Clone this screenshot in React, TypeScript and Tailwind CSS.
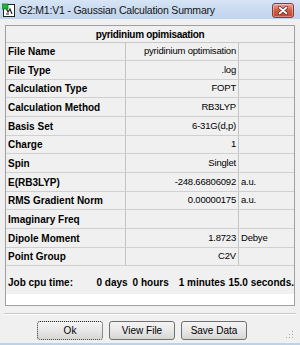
import React from "react";

const rows: [string, string, string][] = [
  ["File Name", "pyridinium optimisation", ""],
  ["File Type", ".log", ""],
  ["Calculation Type", "FOPT", ""],
  ["Calculation Method", "RB3LYP", ""],
  ["Basis Set", "6-31G(d,p)", ""],
  ["Charge", "1", ""],
  ["Spin", "Singlet", ""],
  ["E(RB3LYP)", "-248.66806092", "a.u."],
  ["RMS Gradient Norm", "0.00000175", "a.u."],
  ["Imaginary Freq", "", ""],
  ["Dipole Moment", "1.8723", "Debye"],
  ["Point Group", "C2V", ""],
];

const heights = [18, 19, 18, 19, 19, 18, 19, 19, 18, 19, 19, 18];

function AppIcon() {
  return (
    <svg width="14" height="14" viewBox="0 0 14 14">
      <rect x="1.5" y="1.5" width="11" height="12" fill="#fff" stroke="#222" />
      <path d="M4 5 L6 9 L8 6 L10 11" stroke="#222" strokeWidth="1.2" fill="none" />
      <path d="M4 11 h3" stroke="#222" strokeWidth="1" />
      <rect x="0" y="1" width="6" height="5" fill="#22b33a" stroke="#117a22" strokeWidth="0.8" />
    </svg>
  );
}

function CloseButton() {
  return (
    <div className="mt-[3px] mr-[6px] w-[22px] h-[15px] rounded-[3px] border border-[#8a3b2e] bg-gradient-to-b from-[#e9a597] via-[#d05c48] to-[#c7442f] flex items-center justify-center shadow-[inset_0_0_0_1px_rgba(255,255,255,0.35)]">
      <svg width="10" height="9" viewBox="0 0 10 9">
        <path d="M1.5 1.5 L8.5 7.5 M8.5 1.5 L1.5 7.5" stroke="#5a2018" strokeWidth="3.2" strokeLinecap="round" />
        <path d="M1.5 1.5 L8.5 7.5 M8.5 1.5 L1.5 7.5" stroke="#ffffff" strokeWidth="1.8" strokeLinecap="round" />
      </svg>
    </div>
  );
}

function Btn({ label, focus }: { label: string; focus?: boolean }) {
  return (
    <div
      className={
        focus
          ? "w-[66px] h-[19px] rounded-[3px] border border-dotted border-[#303030] bg-gradient-to-b from-[#f4f4f4] via-[#e8e8e8] to-[#d6d6d6] flex items-center justify-center text-[10px] text-black"
          : "w-[66px] h-[19px] rounded-[3px] border border-[#707070] bg-gradient-to-b from-[#f4f4f4] via-[#e8e8e8] to-[#d6d6d6] flex items-center justify-center text-[10px] text-black"
      }
    >
      {label}
    </div>
  );
}

export default function App() {
  return (
    <div
      className="relative w-[300px] h-[345px] flex flex-col bg-[#f0f0f0] overflow-hidden"
      style={{ fontFamily: '"Liberation Sans", Arial, sans-serif' }}
    >
      <div className="h-[19px] flex items-start bg-gradient-to-b from-[#d6e4f5] to-[#bfd3ec]">
        <div className="ml-[2px] mt-[3px]">
          <AppIcon />
        </div>
        <div className="ml-[3px] mt-[3px] text-[10.5px] tracking-[-0.2px] leading-[14px] text-[#141414] flex-1">
          G2:M1:V1 - Gaussian Calculation Summary
        </div>
        <CloseButton />
      </div>

      <div className="mt-[6px] ml-[5px] w-[290px] border border-[#a0a0a0] flex flex-col">
        <div className="h-[17px] border-b border-[#c8c8c8] flex items-center justify-center text-[10px] font-bold tracking-[-0.3px] text-black">
          pyridinium opimisaation
        </div>
        {rows.map(([label, value, unit], i) => (
          <div
            key={label}
            className={
              heights[i] === 18
                ? "h-[18px] border-b border-[#d0d0d0] flex"
                : "h-[19px] border-b border-[#d0d0d0] flex"
            }
          >
            <div className="w-[120px] border-r border-[#c4c4c4] pl-[2px] flex items-center text-[10px] font-bold text-black whitespace-nowrap">
              {label}
            </div>
            <div className="w-[113px] border-r border-[#c4c4c4] pr-[2px] flex items-center justify-end text-[9.5px] tracking-[-0.2px] text-black whitespace-nowrap">
              {value}
            </div>
            <div className="w-[55px] pl-[2px] flex items-center text-[9.5px] tracking-[-0.2px] text-black">
              {unit}
            </div>
          </div>
        ))}
        <div className="h-[28px] flex items-end pb-[4px] pl-[2px] text-[10px] font-bold text-black whitespace-nowrap">
          <span className="w-[89px]">Job cpu time:</span>
          <span>0 days</span>
          <span className="ml-[5px]">0 hours</span>
          <span className="ml-[10px]">1 minutes</span>
          <span className="ml-[3px]">15.0 seconds.</span>
        </div>
        <div className="h-[11px] bg-white" />
      </div>

      <div className="mt-[7px] mx-[4px] h-[2px] border-t border-[#c9c9c9] border-b border-b-white" />

      <div className="mt-[6px] pl-[37px] flex gap-[6px]">
        <Btn label="Ok" focus />
        <Btn label="View File" />
        <Btn label="Save Data" />
      </div>

      <div className="flex-1" />
      <div className="h-[2px] bg-[#bcd1eb]" />

      <svg className="absolute left-[286px] top-[331px]" width="8" height="8" viewBox="0 0 8 8">
        <rect x="6" y="0" width="1" height="1" fill="#a8a8a8" />
        <rect x="3" y="3" width="1" height="1" fill="#a8a8a8" />
        <rect x="6" y="3" width="1" height="1" fill="#a8a8a8" />
        <rect x="0" y="6" width="1" height="1" fill="#a8a8a8" />
        <rect x="3" y="6" width="1" height="1" fill="#a8a8a8" />
        <rect x="6" y="6" width="1" height="1" fill="#a8a8a8" />
      </svg>
    </div>
  );
}
